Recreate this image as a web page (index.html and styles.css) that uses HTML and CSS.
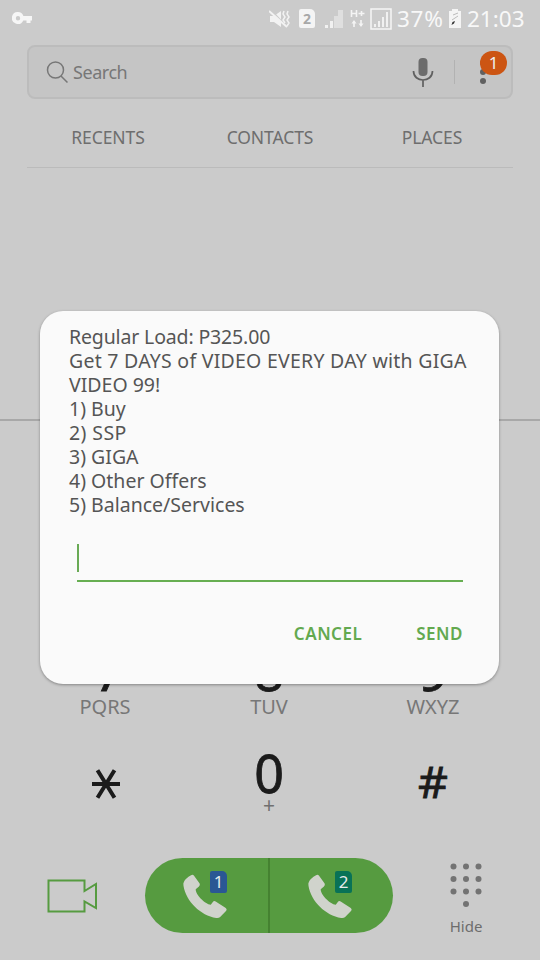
FILE: index.html
```html
<!DOCTYPE html>
<html lang="en">
<head>
<meta charset="utf-8">
<title>Phone</title>
<link rel="stylesheet" href="styles.css">
</head>
<body>
<div class="screen">
  <header class="status">
    <svg class="key" width="21" height="13" viewBox="0 0 21 13"><path fill="#f6f6f6" fill-rule="evenodd" d="M6 0a6 6 0 0 1 5.400 4H20v4.500h-1.500V11h-4V8.500h-3.200A6 6 0 1 1 6 0ZM6 4a2.200 2.200 0 1 0 0 4.400A2.200 2.200 0 0 0 6 4Z"/></svg>
    <div class="status-right">
      <svg class="mute" width="22" height="20" viewBox="0 0 22 20"><path fill="#f2f2f2" d="M1 7h4l7-5v16l-7-5H1z"/><path stroke="#cbcbcb" stroke-width="1.500" d="M2 1l16 17"/><path stroke="#f2f2f2" stroke-width="2" d="M0 2l18 16"/><path fill="none" stroke="#f2f2f2" stroke-width="1.500" d="M15 2l-1 3 2 3-2 3 2 3M19 2l-1 3 2 3-2 3 2 3-2 3"/></svg>
      <span class="sim">2</span>
      <svg class="signal" width="20" height="20" viewBox="0 0 20 20"><g fill="#f1f1f1"><path d="M1 16h3v3H1zM6 12h3v7H6z"/><path opacity=".55" d="M10 7h4v12h-4zM14 1h5v18h-5z"/></g></svg>
      <svg class="data" width="15" height="20" viewBox="0 0 15 20"><g fill="none" stroke="#f4f4f4" stroke-width="1.600"><path d="M1.500 1v7M6.500 1v7M1.500 4.500h5M8.500 4.500h6M11.500 2v5"/><path d="M4 18v-6M11 11v6"/></g><path fill="#f4f4f4" d="M1.500 14.500L4 11l2.500 3.500zM8.500 14.500L11 18l2.500-3.500z"/></svg>
      <svg class="boxed" width="22" height="22" viewBox="0 0 22 22"><path fill="none" stroke="#f6f6f6" stroke-width="1.500" d="M1 1h20v20H1z"/><path stroke="#f1f1f1" stroke-width="2" d="M5 19v-3M9 19v-6M13 19V9M17 19V4"/></svg>
      <span class="percent">37%</span>
      <svg class="battery" width="12" height="20" viewBox="0 0 12 20"><path fill="#f4f4f4" d="M3 0h6v2H12v17H0V2h3z"/><path fill="none" stroke="#bbb" stroke-width="1" d="M4 6l5-2M3 11l6-4"/><path fill="#333" d="M2.500 16l1-3 2.500-1-1 2.500z"/></svg>
      <span class="clock">21:03</span>
    </div>
  </header>

  <div class="search">
    <svg class="lens" width="23" height="23" viewBox="0 0 23 23"><g fill="none" stroke="#777" stroke-width="1.500"><circle cx="9.500" cy="9" r="8"/><path d="M15 15l6.500 6.500"/></g></svg>
    <span class="hint">Search</span>
    <svg class="mic" width="22" height="31" viewBox="0 0 22 31"><rect x="6.500" y="1" width="9" height="18" rx="4" fill="#6c6c6c"/><path fill="none" stroke="#606060" stroke-width="1.700" d="M1.500 14c0 12 19 12 19 0M11 23v7"/></svg>
    <i class="split"></i>
    <div class="more">
      <i></i><i></i><i></i>
      <b class="badge">1</b>
    </div>
  </div>

  <nav class="tabs"><span class="recents">RECENTS</span><span class="contacts">CONTACTS</span><span class="places">PLACES</span></nav>
  <div class="history"></div>

  <section class="keypad">
    <div class="key-cell"><b class="seven">7</b><span class="letters">PQRS</span></div>
    <div class="key-cell"><b>8</b><span class="letters">TUV</span></div>
    <div class="key-cell"><b>9</b><span class="letters">WXYZ</span></div>
    <div class="key-cell"><svg class="star" width="28" height="30" viewBox="0 0 28 30"><path stroke="#1b1b1b" stroke-width="4" d="M0 15h28M5.500 1.200l17 27.600M22.500 1.200L5.500 28.800"/></svg></div>
    <div class="key-cell"><b class="zero">0</b><span class="plus">+</span></div>
    <div class="key-cell"><b class="hash">#</b></div>
  </section>

  <footer class="actions">
    <svg class="video" width="52" height="34" viewBox="0 0 52 34"><path fill="none" stroke="#569b40" stroke-width="2" d="M2.500 1.500h36v10.500L50 5v24L38.500 22.500v10H2.500z"/></svg>
    <div class="calls">
      <div class="call">
        <svg class="handset" width="45" height="45" viewBox="0 0 46 46"><path fill="#d0d3cc" d="M8.200 1.200Q10 0 11.300 1.700L17 9.800Q17.800 11.500 16.300 12.700L13 15.600C12.600 20.700 22.400 30.800 28.400 31.500L30.500 28.500Q31.700 26.800 33.400 28L43.700 34.800Q45.300 36 44.200 37.600L38 44Q36.600 45.300 34 45C18 42.500 3 28 .5 12Q0 9.500 1 7.800Q2.500 4.500 8.200 1.200Z"/></svg>
        <span class="card blue">1</span>
      </div>
      <div class="call">
        <svg class="handset" width="45" height="45" viewBox="0 0 46 46"><path fill="#d0d3cc" d="M8.200 1.200Q10 0 11.300 1.700L17 9.800Q17.800 11.500 16.300 12.700L13 15.600C12.600 20.700 22.400 30.800 28.400 31.500L30.500 28.500Q31.700 26.800 33.400 28L43.700 34.800Q45.300 36 44.200 37.600L38 44Q36.600 45.300 34 45C18 42.500 3 28 .5 12Q0 9.500 1 7.800Q2.500 4.500 8.200 1.200Z"/></svg>
        <span class="card teal">2</span>
      </div>
    </div>
    <div class="hide">
      <svg width="32" height="44" viewBox="0 0 32 44"><g fill="#737373"><circle cx="3.500" cy="3.500" r="3"/><circle cx="16" cy="3.500" r="3"/><circle cx="28.500" cy="3.500" r="3"/><circle cx="3.500" cy="16" r="3"/><circle cx="16" cy="16" r="3"/><circle cx="28.500" cy="16" r="3"/><circle cx="3.500" cy="28.500" r="3"/><circle cx="16" cy="28.500" r="3"/><circle cx="28.500" cy="28.500" r="3"/><circle cx="16" cy="41" r="3"/></g></svg>
      <span>Hide</span>
    </div>
  </footer>

  <div class="dialog">
    <div class="message">
      <p class="load">Regular Load: P325.00</p>
      <p class="promo">Get 7 DAYS of VIDEO EVERY DAY with GIGA</p>
      <p>VIDEO 99!</p>
      <p>1) Buy</p>
      <p class="ssp">2) SSP</p>
      <p>3) GIGA</p>
      <p>4) Other Offers</p>
      <p>5) Balance/Services</p>
    </div>
    <div class="field"><i class="caret"></i></div>
    <div class="buttons"><span>CANCEL</span><span>SEND</span></div>
  </div>
</div>
</body>
</html>
```
FILE: styles.css
```css
* { box-sizing: border-box; }
body { margin: 0; font-family: "Noto Sans", sans-serif; }
p { margin: 0; }
svg { display: block; flex: none; }
.screen { position: relative; width: 540px; height: 960px; overflow: hidden; background: #cbcbcb; display: flex; flex-direction: column; }

.status { height: 37px; flex: none; display: flex; justify-content: space-between; align-items: center; padding: 0 16px 0 12px; color: #f8f8f8; }
.status-right { display: flex; align-items: center; height: 37px; }
.mute { margin-right: 8px; }
.sim { width: 16px; height: 19px; border-radius: 2px 5px 2px 2px; background: #f4f4f4; color: #a8a8a8; font-size: 14px; font-weight: 700; line-height: 19px; text-align: center; margin-right: 9px; }
.signal { margin-right: 6px; }
.data { margin-right: 5px; }
.boxed { margin-right: 5px; }
.percent { width: 48px; margin-right: 4px; font-size: 22.500px; line-height: 37px; letter-spacing: 0.7px; white-space: nowrap; }
.battery { margin-right: 6px; }
.clock { width: 57px; font-size: 22.500px; line-height: 37px; white-space: nowrap; }

.search { height: 54px; flex: none; margin: 8px 27px 0; border: 2px solid #bcbcbc; border-radius: 8px; background: #c5c5c5; display: flex; align-items: center; padding-left: 17px; }
.hint { margin-left: 4px; font-size: 18px; line-height: 24px; color: #777; width: 55px; letter-spacing: -0.45px; }
.mic { margin-left: 284px; }
.split { width: 1px; height: 24px; background: #b2b2b2; margin-left: 20px; }
.more { position: relative; display: flex; flex-direction: column; gap: 3px; margin-left: 25px; }
.more i { width: 6px; height: 6px; border-radius: 50%; background: #606060; }
.badge { position: absolute; left: 0; top: -9px; width: 27px; height: 24px; border-radius: 12px; background: #cc5513; color: #eee; font-size: 17px; font-weight: 400; line-height: 24px; text-align: center; }

.tabs { height: 69px; flex: none; margin: 0 27px; border-bottom: 1px solid #bbb; display: grid; grid-template-columns: repeat(3, 1fr); text-align: center; font-size: 17.500px; line-height: 77px; color: #6e6e6e; letter-spacing: -0.1px; }
.history { height: 253px; flex: none; border-bottom: 2px solid #a8a8a8; }

.keypad { height: 401px; flex: none; margin: 0 25px 0 23px; padding-top: 225px; display: grid; grid-template-columns: repeat(3, 164px); grid-template-rows: 76px 99px; }
.key-cell { display: flex; flex-direction: column; align-items: center; }
.key-cell b { font-size: 52px; font-weight: 400; line-height: 50px; height: 50px; color: #1b1b1b; -webkit-text-stroke: 0.8px #1b1b1b; }
.key-cell .seven { padding-left: 8px; }
.letters { font-size: 20px; line-height: 24px; color: #777; margin-top: -1px; }
.star { margin: 47px 0 0 2px; }
.key-cell .zero { margin-top: 26px; }
.plus { font-size: 21px; line-height: 22px; height: 22px; color: #707070; margin-top: -4px; }
.key-cell .hash { font-size: 43px; margin-top: 35px; transform: scaleX(1.08); }

.actions { height: 138px; flex: none; display: flex; align-items: flex-start; padding: 36px 50px 0 46px; }
.video { margin-top: 21px; }
.calls { margin-left: 47px; width: 248px; height: 75px; border-radius: 38px; background: #569b40; display: flex; overflow: hidden; }
.call { position: relative; width: 123px; height: 75px; padding: 16px 0 0 38px; }
.call + .call { width: 125px; border-left: 2px solid #458231; }
.card { position: absolute; left: 65px; top: 13px; width: 17px; height: 22px; border-radius: 2px 5px 2px 2px; color: #e4ebeb; font-size: 17px; line-height: 22px; text-align: center; }
.blue { background: #2a5794; }
.teal { background: #087256; }
.hide { margin: 5px 0 0 57px; display: flex; flex-direction: column; align-items: center; width: 32px; font-size: 15px; line-height: 20px; color: #6d6d6d; gap: 9px; }

.dialog { position: absolute; left: 40px; top: 311px; width: 459px; height: 373px; border-radius: 23px; background: #fafafa; box-shadow: 0 1px 3px rgba(0,0,0,.35); padding: 14px 36px 0 29px; }
.message { font-size: 19.500px; line-height: 24px; color: #555; white-space: nowrap; }
.load { letter-spacing: -0.15px; }
.promo { letter-spacing: 0.26px; }
.ssp { letter-spacing: 0.4px; }
.field { width: 386px; height: 48px; margin: 17px 0 0 8px; border-bottom: 2px solid #67ae51; padding-top: 10px; }
.caret { display: block; width: 2px; height: 28px; background: #69aa55; }
.buttons { display: flex; justify-content: flex-end; gap: 54px; margin-top: 40px; font-size: 17px; font-weight: 600; line-height: 24px; letter-spacing: 0.5px; color: #63a94f; }
```
